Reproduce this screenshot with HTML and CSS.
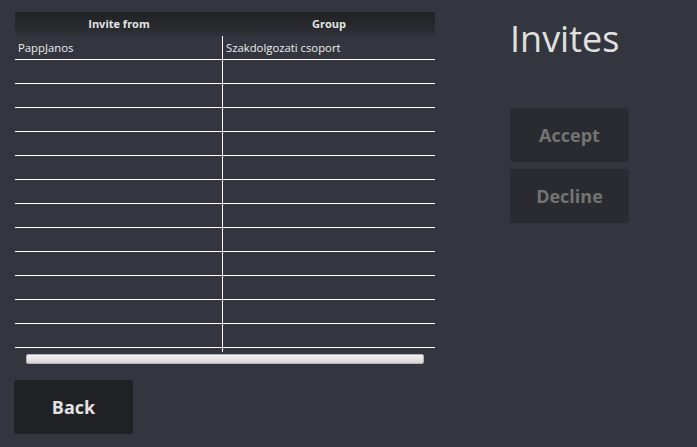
FILE: index.html
```html
<!DOCTYPE html>
<html>
<head>
<meta charset="utf-8">
<link rel="stylesheet" href="styles.css">
</head>
<body>
<div class="page">
  <div class="left">
    <div class="table">
      <div class="th">Invite from</div>
      <div class="th">Group</div>
      <div class="td c1">PappJanos</div><div class="td">Szakdolgozati csoport</div>
      <div class="td c1"></div><div class="td"></div>
      <div class="td c1"></div><div class="td"></div>
      <div class="td c1"></div><div class="td"></div>
      <div class="td c1"></div><div class="td"></div>
      <div class="td c1"></div><div class="td"></div>
      <div class="td c1"></div><div class="td"></div>
      <div class="td c1"></div><div class="td"></div>
      <div class="td c1"></div><div class="td"></div>
      <div class="td c1"></div><div class="td"></div>
      <div class="td c1"></div><div class="td"></div>
      <div class="td c1"></div><div class="td"></div>
      <div class="td c1"></div><div class="td"></div>
      <div class="filler c1"></div><div class="filler"></div>
    </div>
    <div class="scrollbar"></div>
    <button class="btn back">Back</button>
  </div>
  <div class="right">
    <h1 class="title">Invites</h1>
    <div class="actions">
      <button class="btn action">Accept</button>
      <button class="btn action">Decline</button>
    </div>
  </div>
</div>
</body>
</html>
```
FILE: styles.css
```css
html, body {
  margin: 0;
  padding: 0;
  background: #33363e;
  width: 697px;
  height: 447px;
  overflow: hidden;
  font-family: "Open Sans", "Noto Sans", sans-serif;
}
.page {
  display: flex;
  padding-top: 12px;
}
.left {
  display: flex;
  flex-direction: column;
  margin-left: 15px;
  width: 420px;
}
.table {
  display: grid;
  grid-template-columns: 208px 212px;
}
.th {
  height: 24px;
  line-height: 24px;
  text-align: center;
  font-size: 11px;
  font-weight: 700;
  color: #e4e4e4;
  background: linear-gradient(to bottom, #222326 0%, #26272b 50%, #30323a 100%);
}
.td {
  height: 23px;
  border-bottom: 1px solid #ffffff;
  font-size: 11.3px;
  color: #ececec;
  line-height: 23px;
  padding-left: 3px;
  box-sizing: content-box;
  white-space: nowrap;
}
.c1 {
  border-right: 1px solid #ffffff;
}
.td.c1 { width: 204px; }
.filler { height: 4px; }
.scrollbar {
  margin-top: 2px;
  margin-left: 11px;
  width: 396px;
  height: 8px;
  border: 1px solid #b4b4b4;
  border-radius: 2px;
  background: linear-gradient(to bottom, #f4f4f4, #e2e2e2 60%, #d6d6d6);
}
.btn {
  border: none;
  border-radius: 3px;
  font-family: "Open Sans", "Noto Sans", sans-serif;
  font-weight: 700;
  font-size: 18px;
  width: 119px;
  height: 54px;
  padding: 0;
  cursor: pointer;
}
.back {
  margin-top: 16px;
  margin-left: -1px;
  background: #202125;
  color: #e2e2e2;
}
.right {
  margin-left: 75px;
  display: flex;
  flex-direction: column;
}
.title {
  margin: 0;
  margin-left: 0;
  font-size: 36px;
  font-weight: 400;
  color: #e0e0e0;
  line-height: 54px;
  height: 54px;
}
.actions {
  margin-top: 42px;
  display: flex;
  flex-direction: column;
  gap: 7px;
}
.action {
  background: #2a2b30;
  color: #737373;
}
```
